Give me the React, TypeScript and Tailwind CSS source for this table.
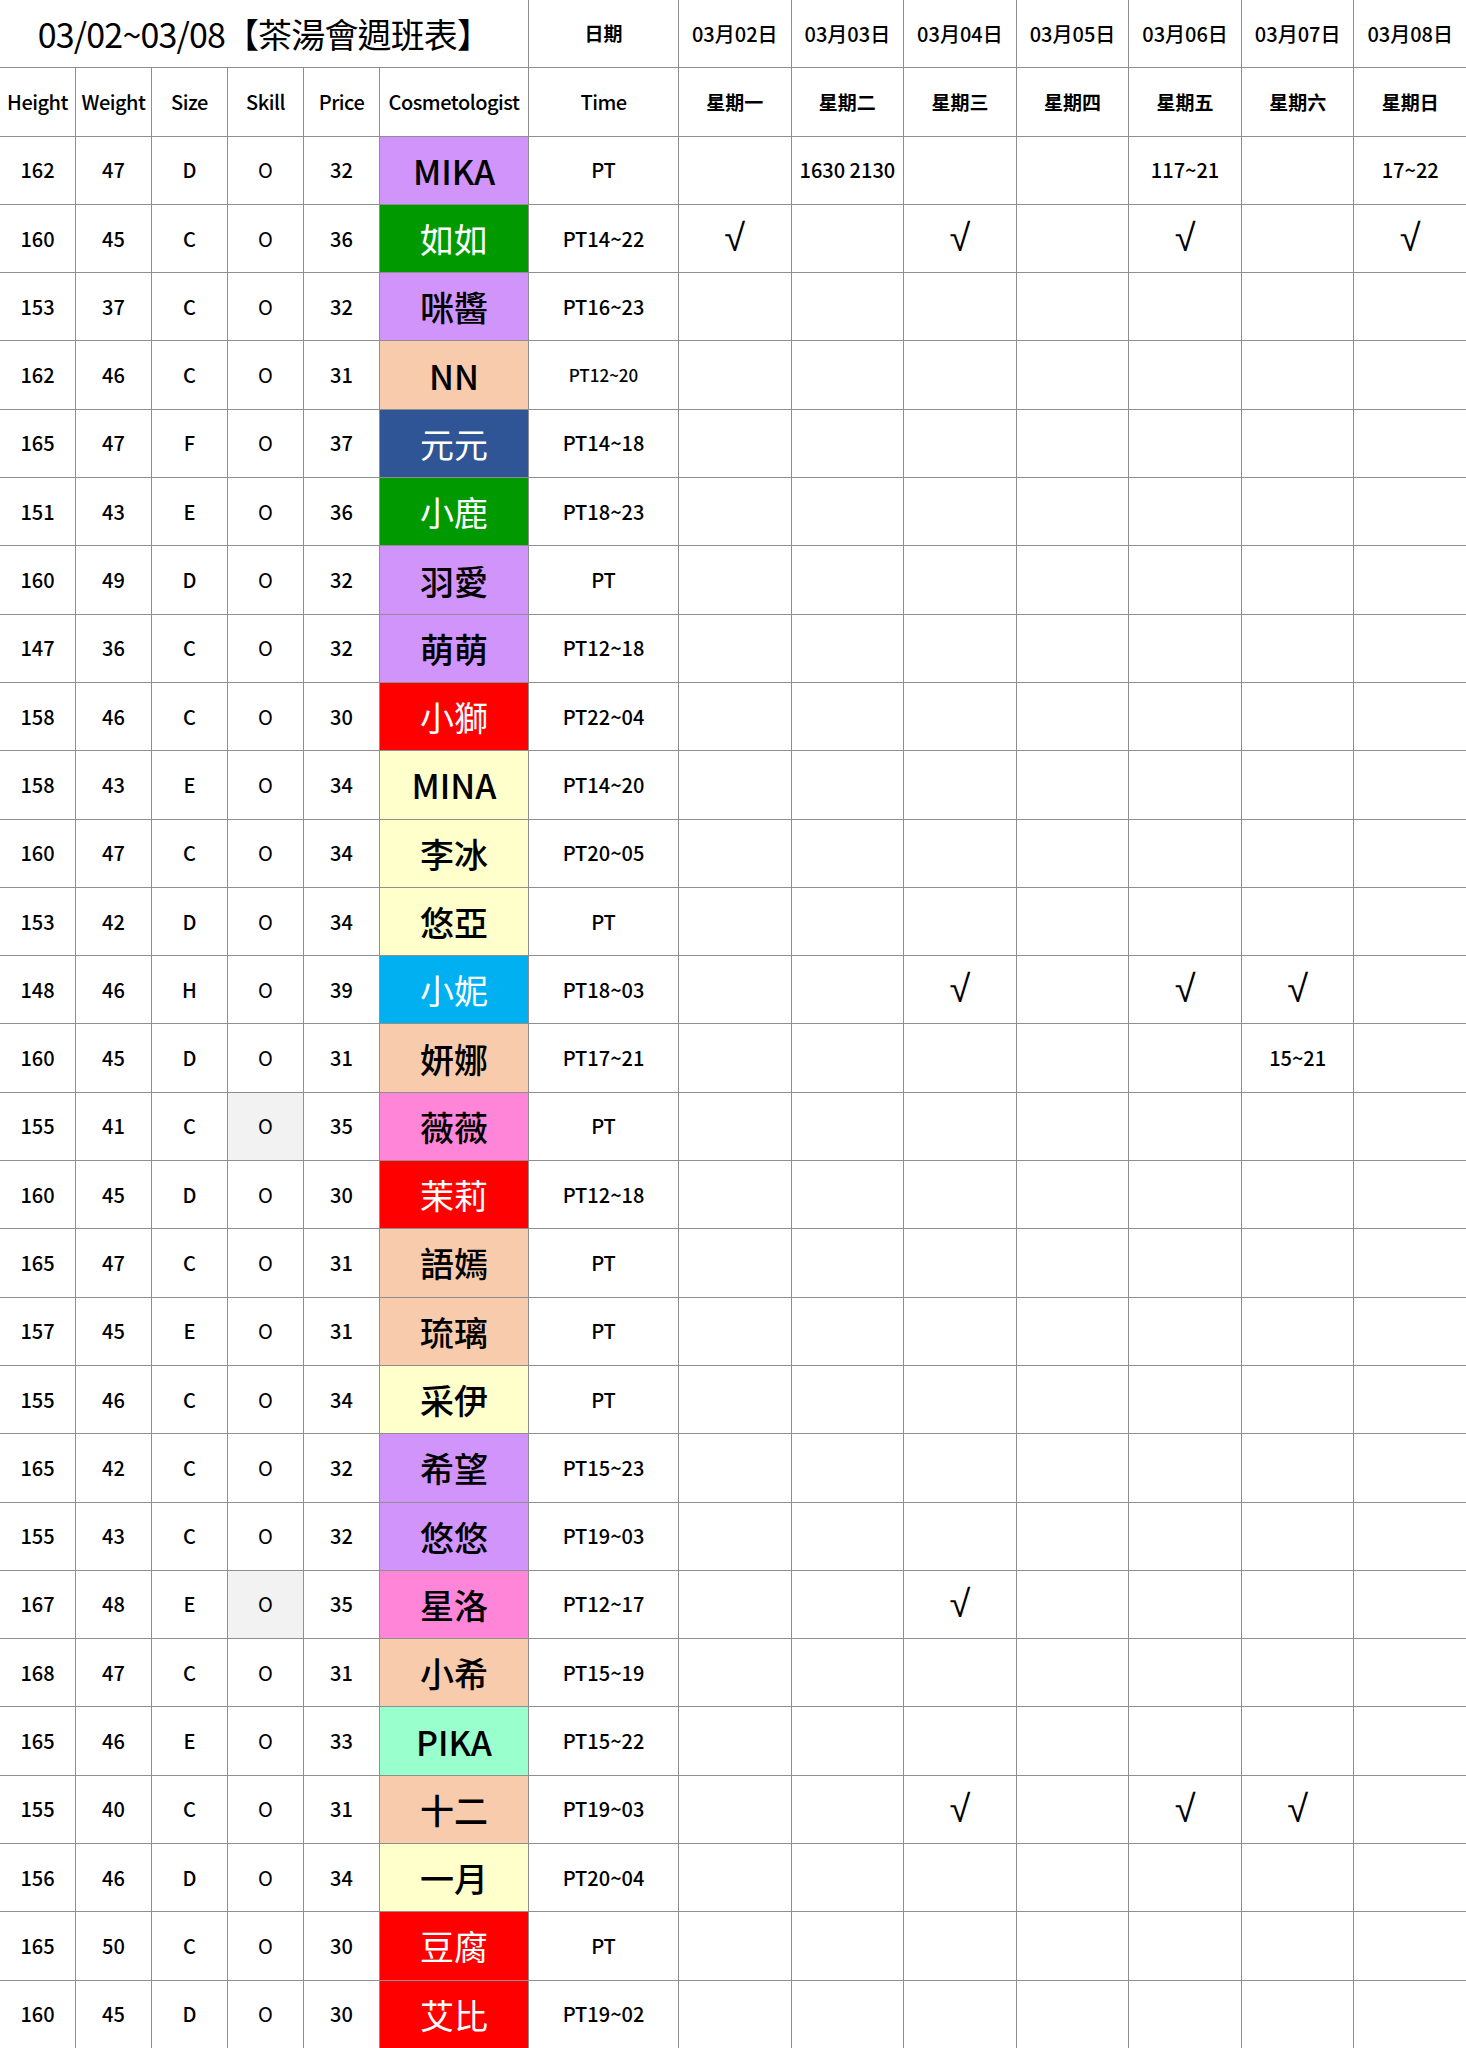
const FONT = "font-['Noto_Sans_CJK_TC','Noto_Sans',sans-serif]";

const dates = ['03月02日', '03月03日', '03月04日', '03月05日', '03月06日', '03月07日', '03月08日'];
const weekdays = ['星期一', '星期二', '星期三', '星期四', '星期五', '星期六', '星期日'];

const colors: Record<string, string> = {
  purple: 'bg-[#d194fb] text-black font-medium',
  green: 'bg-[#009a00] text-white',
  peach: 'bg-[#f8cbad] text-black font-medium',
  blue: 'bg-[#2f5597] text-white',
  red: 'bg-[#ff0000] text-white',
  yellow: 'bg-[#ffffcc] text-black font-medium',
  cyan: 'bg-[#00b0f0] text-white',
  pink: 'bg-[#ff85d9] text-black font-medium',
  mint: 'bg-[#99ffcc] text-black font-medium',
};

type Row = {
  h: string;
  w: string;
  size: string;
  price: string;
  name: string;
  color: string;
  time: string;
  days?: Record<number, string>;
  grey?: boolean;
  small?: boolean;
};

const rows: Row[] = [
  { h: '162', w: '47', size: 'D', price: '32', name: 'MIKA', color: 'purple', time: 'PT', days: { 1: '1630 2130', 4: '117~21', 6: '17~22' } },
  { h: '160', w: '45', size: 'C', price: '36', name: '如如', color: 'green', time: 'PT14~22', days: { 0: '√', 2: '√', 4: '√', 6: '√' } },
  { h: '153', w: '37', size: 'C', price: '32', name: '咪醬', color: 'purple', time: 'PT16~23' },
  { h: '162', w: '46', size: 'C', price: '31', name: 'NN', color: 'peach', time: 'PT12~20', small: true },
  { h: '165', w: '47', size: 'F', price: '37', name: '元元', color: 'blue', time: 'PT14~18' },
  { h: '151', w: '43', size: 'E', price: '36', name: '小鹿', color: 'green', time: 'PT18~23' },
  { h: '160', w: '49', size: 'D', price: '32', name: '羽愛', color: 'purple', time: 'PT' },
  { h: '147', w: '36', size: 'C', price: '32', name: '萌萌', color: 'purple', time: 'PT12~18' },
  { h: '158', w: '46', size: 'C', price: '30', name: '小獅', color: 'red', time: 'PT22~04' },
  { h: '158', w: '43', size: 'E', price: '34', name: 'MINA', color: 'yellow', time: 'PT14~20' },
  { h: '160', w: '47', size: 'C', price: '34', name: '李冰', color: 'yellow', time: 'PT20~05' },
  { h: '153', w: '42', size: 'D', price: '34', name: '悠亞', color: 'yellow', time: 'PT' },
  { h: '148', w: '46', size: 'H', price: '39', name: '小妮', color: 'cyan', time: 'PT18~03', days: { 2: '√', 4: '√', 5: '√' } },
  { h: '160', w: '45', size: 'D', price: '31', name: '妍娜', color: 'peach', time: 'PT17~21', days: { 5: '15~21' } },
  { h: '155', w: '41', size: 'C', price: '35', name: '薇薇', color: 'pink', time: 'PT', grey: true },
  { h: '160', w: '45', size: 'D', price: '30', name: '茉莉', color: 'red', time: 'PT12~18' },
  { h: '165', w: '47', size: 'C', price: '31', name: '語嫣', color: 'peach', time: 'PT' },
  { h: '157', w: '45', size: 'E', price: '31', name: '琉璃', color: 'peach', time: 'PT' },
  { h: '155', w: '46', size: 'C', price: '34', name: '采伊', color: 'yellow', time: 'PT' },
  { h: '165', w: '42', size: 'C', price: '32', name: '希望', color: 'purple', time: 'PT15~23' },
  { h: '155', w: '43', size: 'C', price: '32', name: '悠悠', color: 'purple', time: 'PT19~03' },
  { h: '167', w: '48', size: 'E', price: '35', name: '星洛', color: 'pink', time: 'PT12~17', grey: true, days: { 2: '√' } },
  { h: '168', w: '47', size: 'C', price: '31', name: '小希', color: 'peach', time: 'PT15~19' },
  { h: '165', w: '46', size: 'E', price: '33', name: 'PIKA', color: 'mint', time: 'PT15~22' },
  { h: '155', w: '40', size: 'C', price: '31', name: '十二', color: 'peach', time: 'PT19~03', days: { 2: '√', 4: '√', 5: '√' } },
  { h: '156', w: '46', size: 'D', price: '34', name: '一月', color: 'yellow', time: 'PT20~04' },
  { h: '165', w: '50', size: 'C', price: '30', name: '豆腐', color: 'red', time: 'PT' },
  { h: '160', w: '45', size: 'D', price: '30', name: '艾比', color: 'red', time: 'PT19~02' },
];

function Cell({ children, className = '', bg = 'bg-white' }: { children?: React.ReactNode; className?: string; bg?: string }) {
  return <div className={`flex items-center justify-center ${bg} ${className}`}>{children}</div>;
}

export default function App() {
  return (
    <div className={`w-[1466px] h-[2048px] bg-white ${FONT} text-black`}>
      <div className="grid grid-cols-[75px_75px_75px_75px_75px_148px_149px_repeat(7,1fr)] auto-rows-[67.3px] gap-px bg-[#8f8f8f] h-full">
        {/* title row */}
        <Cell className="col-span-6 text-[34px] tracking-tight">03/02~03/08【茶湯會週班表】</Cell>
        <Cell className="text-[19px] font-bold">日期</Cell>
        {dates.map((d) => (
          <Cell key={d} className="text-[20px] font-medium">{d}</Cell>
        ))}

        {/* column headers */}
        {['Height', 'Weight', 'Size', 'Skill', 'Price', 'Cosmetologist', 'Time'].map((t) => (
          <Cell key={t} className="text-[20px] font-medium tracking-tight">{t}</Cell>
        ))}
        {weekdays.map((d) => (
          <Cell key={d} className="text-[19px] font-bold">{d}</Cell>
        ))}

        {rows.map((r, i) => (
          <div key={i} className="contents">
            <Cell className="text-[20px] font-medium">{r.h}</Cell>
            <Cell className="text-[20px] font-medium">{r.w}</Cell>
            <Cell className="text-[20px] font-medium">{r.size}</Cell>
            <Cell bg={r.grey ? 'bg-[#f2f2f2]' : 'bg-white'} className="text-[20px]">O</Cell>
            <Cell className="text-[20px] font-medium">{r.price}</Cell>
            <Cell bg={colors[r.color]} className="text-[34px]">
              {r.name}
            </Cell>
            <Cell className={`${r.small ? 'text-[17px]' : 'text-[20px]'} font-medium`}>{r.time}</Cell>
            {[0, 1, 2, 3, 4, 5, 6].map((d) => {
              const v = r.days?.[d];
              return v === '√' ? (
                <Cell key={d} className="text-[38px] font-['Liberation_Sans',sans-serif]">
                  {v}
                </Cell>
              ) : (
                <Cell key={d} className="text-[20px] font-medium">
                  {v}
                </Cell>
              );
            })}
          </div>
        ))}
      </div>
    </div>
  );
}
